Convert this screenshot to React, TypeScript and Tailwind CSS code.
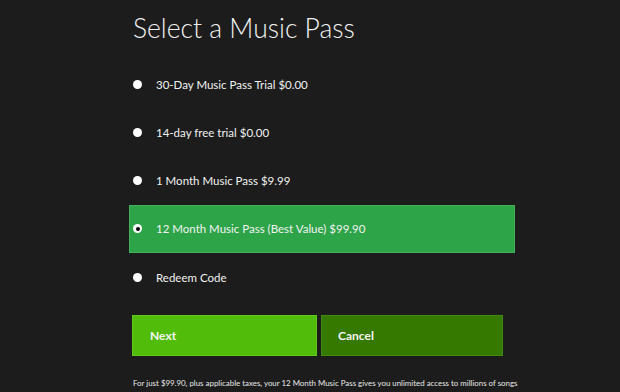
import { useState } from "react";

const OPTIONS = [
  "30-Day Music Pass Trial $0.00",
  "14-day free trial $0.00",
  "1 Month Music Pass $9.99",
  "12 Month Music Pass (Best Value) $99.90",
  "Redeem Code",
];

export default function App() {
  const [selected, setSelected] = useState(3);

  return (
    <div
      className="h-[392px] w-full overflow-hidden bg-[#1c1c1c] pl-[129px] text-white"
      style={{ fontFamily: 'Lato, "Open Sans", sans-serif' }}
    >
      <h1 className="h-[60px] pl-[4px] pt-[10px] text-[26.5px] font-light leading-[36px] text-[#f2f2f2]">
        Select a Music Pass
      </h1>

      <div className="flex w-[386px] flex-col">
        {OPTIONS.map((label, i) => {
          const active = i === selected;
          return (
            <button
              key={label}
              type="button"
              onClick={() => setSelected(i)}
              className={
                active
                  ? "flex h-[48.25px] items-center gap-[14px] border border-[#45b05a] bg-[#2ca447] pl-[3px] text-left"
                  : "flex h-[48.25px] items-center gap-[14px] border border-transparent pl-[3px] text-left"
              }
            >
              <span className="flex h-[9px] w-[9px] items-center justify-center rounded-full bg-white">
                {active && <span className="h-[4px] w-[4px] rounded-full bg-black" />}
              </span>
              <span className="text-[11.5px] text-[#f2f2f2]">{label}</span>
            </button>
          );
        })}
      </div>

      <div className="mt-[14px] flex gap-[4px] pl-[3px]">
        <button
          type="button"
          className="h-[41px] w-[185px] border border-[#62c91c] bg-[#52bc0a] pl-[17px] text-left text-[12px] font-bold text-[#f4f4f4]"
        >
          Next
        </button>
        <button
          type="button"
          className="h-[41px] w-[182px] border border-[#438a10] bg-[#357900] pl-[16px] text-left text-[12px] font-bold text-[#f4f4f4]"
        >
          Cancel
        </button>
      </div>

      <p className="mt-[21px] whitespace-nowrap pl-[4px] text-[7.9px] leading-[12px] text-[#e8e8e8]">
        For just $99.90, plus applicable taxes, your 12 Month Music Pass gives you unlimited access to millions of songs
      </p>
    </div>
  );
}
